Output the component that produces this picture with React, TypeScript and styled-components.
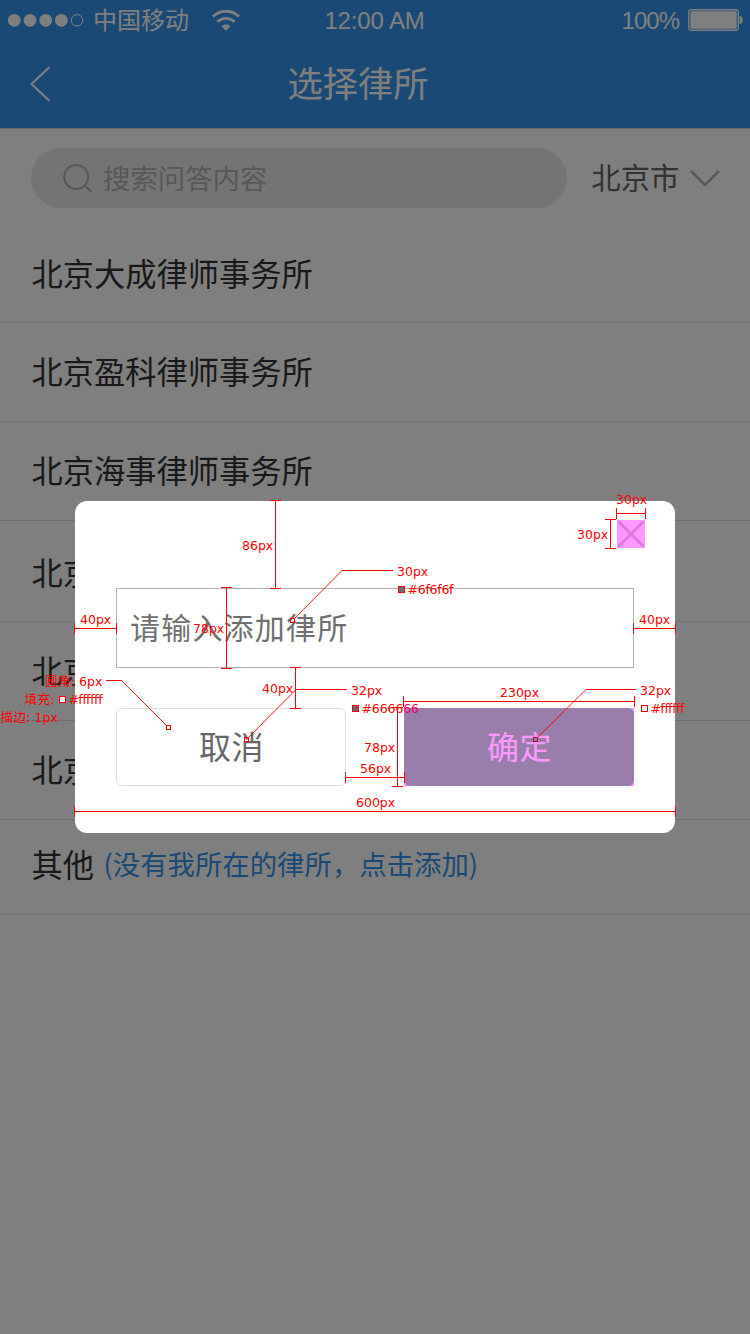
import React from 'react';
import styled, { createGlobalStyle } from 'styled-components';

const GlobalStyle = createGlobalStyle`
  *, *::before, *::after { box-sizing: border-box; }
  body { margin: 0; background: #fff; }
`;

const Screen = styled.div`
  position: relative;
  width: 750px;
  height: 1334px;
  overflow: hidden;
  background: #fff;
  font-family: 'Noto Sans CJK SC', sans-serif;
  white-space: nowrap;
`;

const Header = styled.header`
  height: 128px;
  background: #3692ea;
  color: #fff;
`;

const StatusBar = styled.div`
  display: grid;
  grid-template-columns: 1fr auto 1fr;
  align-items: center;
  height: 40px;
  padding: 0 6px 0 8px;
`;

const StatusGroup = styled.div<{ $end?: boolean }>`
  display: flex;
  align-items: center;
  justify-content: ${(p) => (p.$end ? 'flex-end' : 'flex-start')};
`;

const Carrier = styled.span`
  margin: 0 23px 0 9px;
  padding-bottom: 2px;
  font-size: 24px;
  line-height: 38px;
`;

const StatusText = styled.span<{ $tracking?: number }>`
  padding-top: 2px;
  font-family: 'Liberation Sans', Arial, sans-serif;
  font-size: 24px;
  letter-spacing: ${(p) => p.$tracking ?? 0}px;
  line-height: 38px;
`;

const Clock = styled(StatusText)`
  padding-right: 3px;
`;

const Battery = styled.svg`
  margin-left: 9px;
`;

const NavBar = styled.div`
  display: grid;
  grid-template-columns: 60px 1fr 60px;
  align-items: center;
  height: 88px;
`;

const BackIcon = styled.svg`
  margin-left: 29px;
`;

const Title = styled.h1`
  margin: 0;
  padding: 0 34px 4px 0;
  text-align: center;
  font-size: 35.3px;
  font-weight: 400;
  line-height: 84px;
`;

const SearchRow = styled.div`
  display: flex;
  align-items: center;
  height: 100px;
  padding: 0 30px 1px 31px;
  border-top: 1px solid #d6d6d6;
`;

const SearchBox = styled.div`
  display: flex;
  align-items: center;
  gap: 10.5px;
  width: 536px;
  height: 60px;
  padding-left: 31.5px;
  border-radius: 30px;
  background: #e9e9e9;
  color: #b0b0b0;
  font-size: 27.4px;
`;

const City = styled.div`
  display: flex;
  align-items: center;
  gap: 10.5px;
  margin-left: 24.5px;
  color: #666;
  font-size: 29.4px;
`;

const Label = styled.span<{ $lift: number }>`
  line-height: 40px;
  padding-bottom: ${(p) => p.$lift}px;
`;

const FirmList = styled.ul`
  margin: 0;
  padding: 0;
  list-style: none;
`;

const FirmRow = styled.li<{ $height: number; $lift?: number }>`
  display: flex;
  align-items: center;
  height: ${(p) => p.$height}px;
  padding: 0 31.5px ${(p) => p.$lift ?? 4}px;
  border-bottom: 1px solid #dcdcdc;
  color: #333;
  font-size: 31.25px;
`;

const AddHint = styled.span`
  margin-left: 9.5px;
  color: #3692ea;
  font-size: 27.4px;
`;

const Mask = styled.div`
  position: absolute;
  inset: 0;
  display: flex;
  align-items: center;
  justify-content: center;
  background: rgba(0, 0, 0, 0.5);
`;

const Dialog = styled.div`
  display: flex;
  flex-direction: column;
  width: 600px;
  height: 332px;
  padding: 19px 41px 47px;
  border-radius: 12px;
  background: #fff;
`;

const CloseButton = styled.button`
  display: block;
  align-self: flex-end;
  width: 28px;
  height: 28px;
  margin: 0 -11px 40px 0;
  padding: 0;
  border: 0;
  background: #ff99ff;
`;

const NameField = styled.div`
  height: 80px;
  padding-left: 13px;
  border: 1px solid #b4b4b4;
  color: #6f6f6f;
  font-size: 30px;
  letter-spacing: 1.2px;
  line-height: 75px;
`;

const Actions = styled.div`
  display: flex;
  gap: 58px;
  margin-top: 40px;
`;

const ActionSlot = styled.div<{ $tint?: boolean }>`
  width: 230px;
  height: 78px;
  background: ${(p) => (p.$tint ? '#ff99ff' : 'transparent')};
`;

const ActionButton = styled.button<{ $primary?: boolean }>`
  display: block;
  width: 100%;
  height: 100%;
  padding: 0 0 4px 1px;
  border: ${(p) => (p.$primary ? '0' : '1px solid #ddd')};
  border-radius: 6px;
  background: ${(p) => (p.$primary ? '#997dab' : '#fff')};
  color: ${(p) => (p.$primary ? '#ff99ff' : '#666')};
  font-family: inherit;
  font-size: 32px;
  letter-spacing: 0.6px;
`;

const SpecLayer = styled.svg`
  position: absolute;
  inset: 0;
  font-family: 'DejaVu Sans', 'Noto Sans CJK SC', sans-serif;
  font-size: 12.5px;
`;

const FIRMS = [
  { name: '北京大成律师事务所', height: 95, lift: 5 },
  { name: '北京盈科律师事务所', height: 99 },
  { name: '北京海事律师事务所', height: 99 },
  { name: '北京中伦律师事务所', height: 101, lift: 0 },
  { name: '北京金杜律师事务所', height: 99 },
  { name: '北京君合律师事务所', height: 99 },
];

const RED = '#ff0000';

// Horizontal dimension line with end caps.
const HDim = ({ x1, x2, y }: { x1: number; x2: number; y: number }) => (
  <path
    d={`M${x1} ${y + 0.5}H${x2 + 1}M${x1 + 0.5} ${y - 5}v11M${x2 + 0.5} ${y - 5}v11`}
    stroke={RED}
    fill="none"
  />
);

// Vertical dimension line with end caps.
const VDim = ({ y1, y2, x }: { y1: number; y2: number; x: number }) => (
  <path
    d={`M${x + 0.5} ${y1}V${y2 + 1}M${x - 5} ${y1 + 0.5}h11M${x - 5} ${y2 + 0.5}h11`}
    stroke={RED}
    fill="none"
  />
);

type LeaderProps = { from: number; bend: number; y: number; tx: number; ty: number; dark?: boolean };

// Callout line that ends in a small hollow square on the measured element.
const Leader = ({ from, bend, y, tx, ty, dark }: LeaderProps) => (
  <g fill="none" stroke={RED}>
    <path d={`M${from} ${y + 0.5}H${bend}`} />
    <path d={`M${bend} ${y + 0.5}L${tx + (bend > tx ? 2 : -2)} ${ty - 2}`} strokeWidth="0.9" />
    <rect x={tx - 2} y={ty - 2} width="4" height="4" stroke={dark ? '#cc0033' : RED} />
  </g>
);

const Swatch = ({ x, y, fill }: { x: number; y: number; fill: string }) => (
  <rect x={x + 0.5} y={y + 0.5} width="6" height="6" fill={fill} stroke={RED} />
);

type NoteProps = { x: number; y: number; w?: number; children: React.ReactNode };

const Note = ({ x, y, w, children }: NoteProps) => (
  <text x={x} y={y} fill={RED} textLength={w} lengthAdjust="spacing">
    {children}
  </text>
);

const SpecNotes = () => (
  <SpecLayer width="750" height="1334" viewBox="0 0 750 1334">
    <VDim x={275} y1={500} y2={588} />
    <VDim x={226} y1={587} y2={668} />
    <VDim x={610} y1={519} y2={548} />
    <VDim x={295} y1={667} y2={708} />
    <VDim x={397} y1={707} y2={786} />
    <HDim y={628} x1={74} x2={116} />
    <HDim y={628} x1={633} x2={675} />
    <HDim y={513} x1={616} x2={645} />
    <HDim y={701} x1={403} x2={634} />
    <HDim y={777} x1={345} x2={404} />
    <HDim y={811} x1={74} x2={675} />

    <Leader from={393} bend={342} y={570} tx={292.5} ty={620.5} />
    <Leader from={347} bend={296} y={689} tx={246.5} ty={739.5} />
    <Leader from={636} bend={586} y={689} tx={535.5} ty={739.5} dark />
    <Leader from={106} bend={121.5} y={680} tx={168.5} ty={727.5} />

    <Swatch x={398} y={586} fill="#6f6f6f" />
    <Swatch x={352} y={705} fill="#666666" />
    <Swatch x={641} y={705} fill="#ffffff" />
    <Swatch x={59} y={696} fill="#ffffff" />

    <Note x={242} y={550}>86px</Note>
    <Note x={397} y={576}>30px</Note>
    <Note x={407.5} y={594} w={46}>#6f6f6f</Note>
    <Note x={193} y={633}>78px</Note>
    <Note x={80} y={624}>40px</Note>
    <Note x={639} y={624}>40px</Note>
    <Note x={616} y={504}>30px</Note>
    <Note x={577} y={539}>30px</Note>
    <Note x={262} y={693}>40px</Note>
    <Note x={351} y={695}>32px</Note>
    <Note x={361.5} y={713} w={57.5}>
      #6666<tspan fill="#f00060">66</tspan>
    </Note>
    <Note x={500} y={697}>230px</Note>
    <Note x={364} y={752}>78px</Note>
    <Note x={360} y={773}>56px</Note>
    <Note x={356} y={807}>600px</Note>
    <Note x={640} y={695}>32px</Note>
    <Note x={650.5} y={713} w={34}>#ffffff</Note>
    <Note x={45} y={686} w={30}>圆角:</Note>
    <Note x={79} y={686}>6px</Note>
    <Note x={24.5} y={704} w={30}>填充:</Note>
    <Note x={68.5} y={704} w={34}>#ffffff</Note>
    <Note x={0.5} y={722} w={30}>描边:</Note>
    <Note x={34.5} y={722}>1px</Note>
  </SpecLayer>
);

export default function App() {
  return (
    <Screen>
      <GlobalStyle />
      <Header>
        <StatusBar>
          <StatusGroup>
            <svg width="76" height="15" viewBox="0 0 76 15">
              {[6.3, 22, 37.7, 53.4].map((cx) => (
                <circle key={cx} cx={cx} cy="7.3" r="6.4" fill="#fff" />
              ))}
              <circle cx="69" cy="7.3" r="5.7" fill="none" stroke="#fff" strokeWidth="1" />
            </svg>
            <Carrier>中国移动</Carrier>
            <svg width="28" height="21" viewBox="0 0 28 21" fill="none" stroke="#fff">
              <path d="M1 6.6C8.4-.5 19.6-.5 27 6.6" strokeWidth="2.8" />
              <path d="M5.4 11.8c4.9-4.7 12.3-4.7 17.2 0" strokeWidth="2.8" />
              <path d="M14 20.8l-4.6-4.5c2.7-2.4 6.5-2.4 9.2 0z" fill="#fff" stroke="none" />
            </svg>
          </StatusGroup>
          <Clock $tracking={-0.15}>12:00 AM</Clock>
          <StatusGroup $end>
            <StatusText $tracking={-1}>100%</StatusText>
            <Battery width="56" height="22" viewBox="0 0 56 22">
              <rect x="0.75" y="0.75" width="49.5" height="20.5" rx="2.5" fill="none" stroke="#fff" strokeWidth="1.3" />
              <rect x="2.3" y="2.3" width="46.4" height="17.4" rx="1.5" fill="#fff" />
              <path d="M51.5 7c4.4 0 4.4 8 0 8z" fill="#fff" />
            </Battery>
          </StatusGroup>
        </StatusBar>
        <NavBar>
          <BackIcon width="22" height="36" viewBox="0 0 22 36">
            <path d="M20.5 1L2.5 18l18 17" fill="none" stroke="#fff" strokeWidth="2" />
          </BackIcon>
          <Title>选择律所</Title>
        </NavBar>
      </Header>

      <SearchRow>
        <SearchBox>
          <svg width="30" height="30" viewBox="0 0 30 30" fill="none" stroke="#b0b0b0" strokeWidth="2">
            <circle cx="13.2" cy="14" r="12" />
            <path d="M21.2 22l6.7 6.5" strokeWidth="2.4" />
          </svg>
          <Label $lift={2}>搜索问答内容</Label>
        </SearchBox>
        <City>
          <Label $lift={4}>北京市</Label>
          <svg width="30" height="18" viewBox="0 0 30 18">
            <path d="M1 2l14 14 14-14" fill="none" stroke="#b0b0b0" strokeWidth="2.6" />
          </svg>
        </City>
      </SearchRow>

      <FirmList>
        {FIRMS.map((firm) => (
          <FirmRow key={firm.name} $height={firm.height} $lift={firm.lift}>
            {firm.name}
          </FirmRow>
        ))}
        <FirmRow $height={95} $lift={8}>
          其他
          <AddHint>(没有我所在的律所，点击添加)</AddHint>
        </FirmRow>
      </FirmList>

      <Mask>
        <Dialog>
          <CloseButton aria-label="关闭">
            <svg width="28" height="28" viewBox="0 0 28 28">
              <path d="M1.5 1.5l25 25M26.5 1.5l-25 25" stroke="#dd7add" strokeWidth="3" />
            </svg>
          </CloseButton>
          <NameField>请输入添加律所</NameField>
          <Actions>
            <ActionSlot>
              <ActionButton>取消</ActionButton>
            </ActionSlot>
            <ActionSlot $tint>
              <ActionButton $primary>确定</ActionButton>
            </ActionSlot>
          </Actions>
        </Dialog>
      </Mask>
      <SpecNotes />
    </Screen>
  );
}
